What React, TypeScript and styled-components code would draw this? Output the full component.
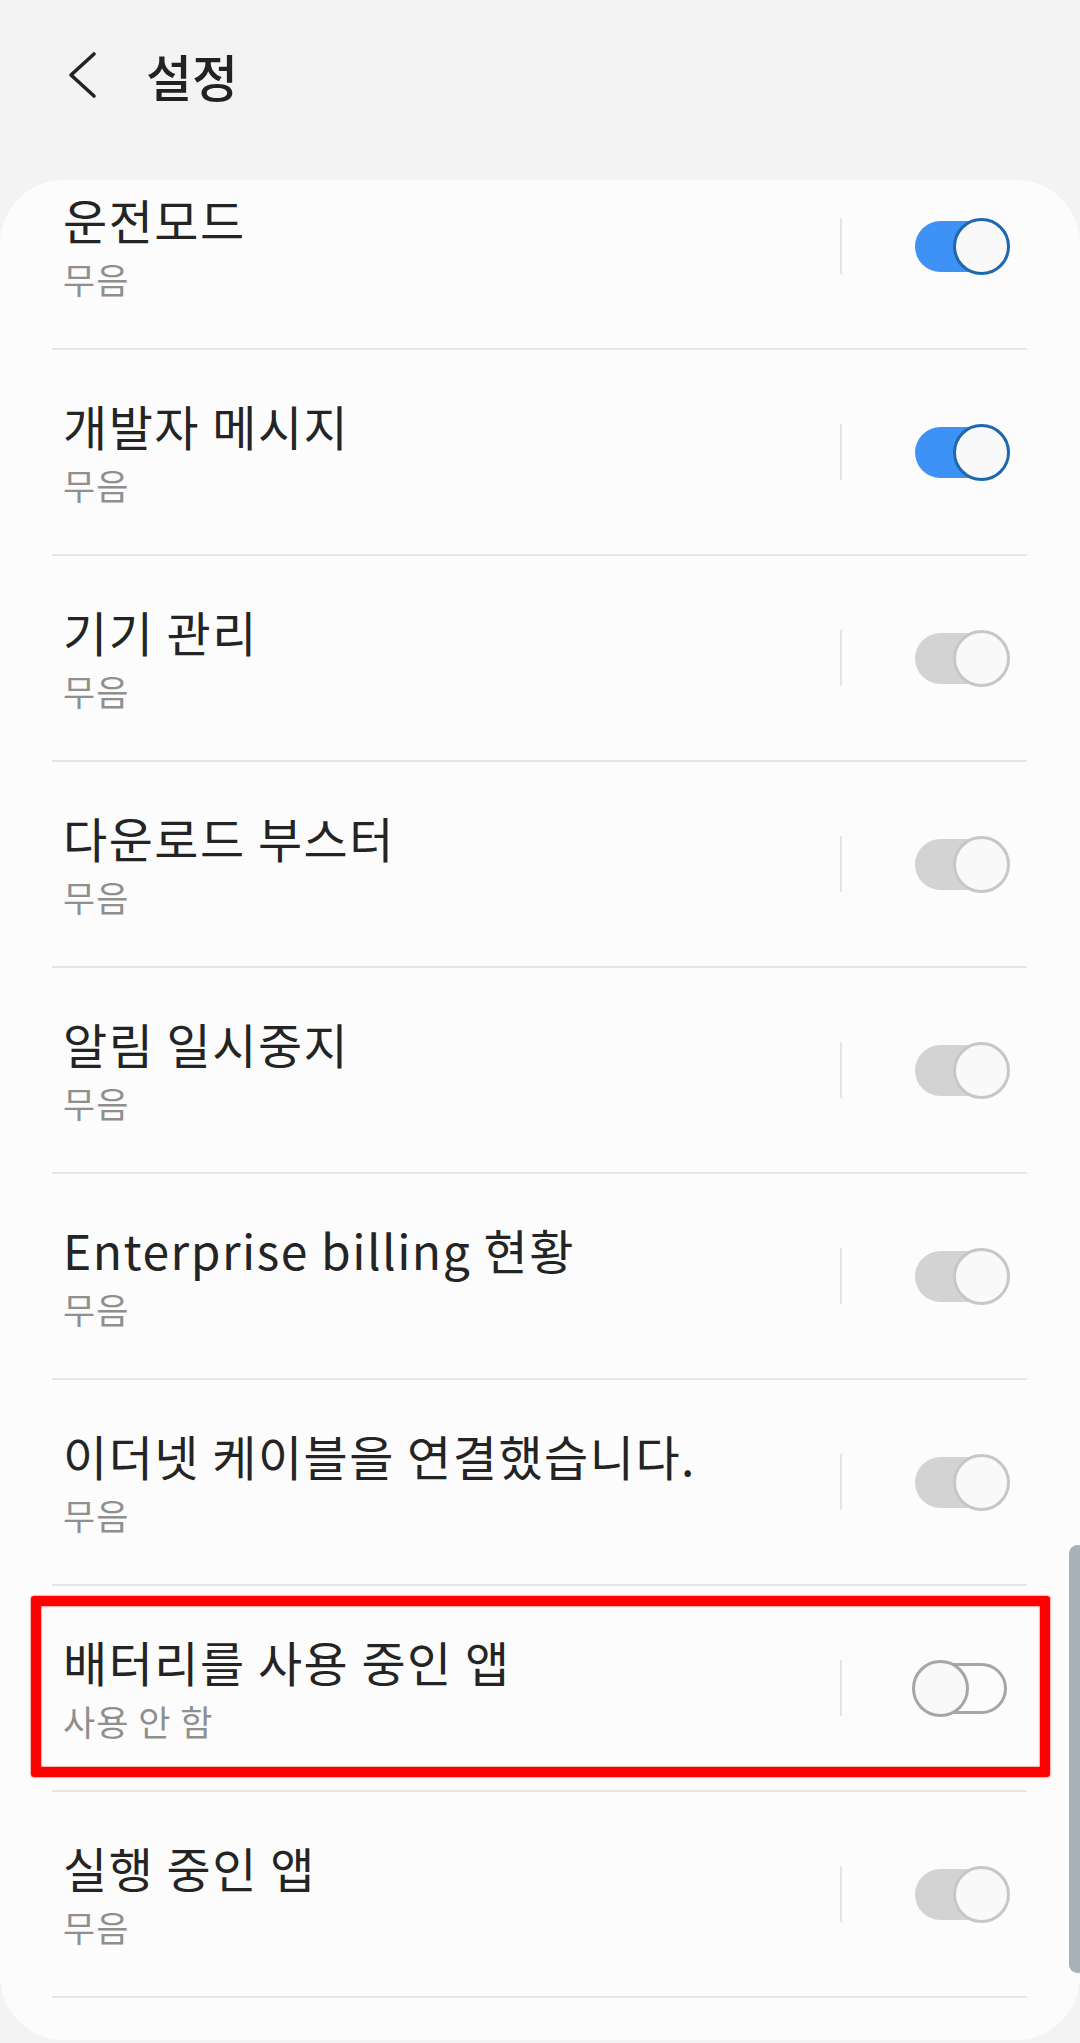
import styled, { createGlobalStyle } from 'styled-components';

type SwitchState = 'on' | 'off' | 'disabled';

interface SettingItem {
  title: string;
  summary: string;
  state: SwitchState;
  marked?: boolean;
}

const items: SettingItem[] = [
  { title: '운전모드', summary: '무음', state: 'on' },
  { title: '개발자 메시지', summary: '무음', state: 'on' },
  { title: '기기 관리', summary: '무음', state: 'disabled' },
  { title: '다운로드 부스터', summary: '무음', state: 'disabled' },
  { title: '알림 일시중지', summary: '무음', state: 'disabled' },
  { title: 'Enterprise billing 현황', summary: '무음', state: 'disabled' },
  { title: '이더넷 케이블을 연결했습니다.', summary: '무음', state: 'disabled' },
  { title: '배터리를 사용 중인 앱', summary: '사용 안 함', state: 'off', marked: true },
  { title: '실행 중인 앱', summary: '무음', state: 'disabled' },
];

const GlobalStyle = createGlobalStyle`
  * {
    box-sizing: border-box;
  }
  body {
    margin: 0;
    height: 2043px;
    overflow: hidden;
    background: #f3f3f3;
    font-family: 'Noto Sans CJK KR', 'Noto Sans', sans-serif;
  }
`;

const BackIcon = () => (
  <svg width='34' height='48' viewBox='0 0 34 48' fill='none'>
    <path d='M28 3 L5 24 L28 45' stroke='#222' strokeWidth='3.6' strokeLinecap='round' strokeLinejoin='round' />
  </svg>
);

const App = () => {
  return (
    <>
      <GlobalStyle />
      <Page>
        <Header>
          <BackButton>
            <BackIcon />
          </BackButton>
          <HeaderTitle>설정</HeaderTitle>
        </Header>
        <Card>
          <List>
            {items.map((item) => (
              <Item key={item.title}>
                <TextArea>
                  <Title>{item.title}</Title>
                  <Summary>{item.summary}</Summary>
                </TextArea>
                <Separator />
                <Switch $state={item.state}>
                  <Track $state={item.state} />
                  <Thumb $state={item.state} />
                </Switch>
                {item.marked && <Highlight />}
              </Item>
            ))}
          </List>
          <ScrollThumb />
        </Card>
      </Page>
    </>
  );
};

const Page = styled.div`
  display: flex;
  flex-direction: column;
  width: 1080px;
  height: 2043px;
  background: #f3f3f3;
`;

const Header = styled.div`
  display: flex;
  align-items: center;
  gap: 46px;
  height: 180px;
  padding: 0 0 30px 66px;
`;

const BackButton = styled.div`
  display: flex;
  align-items: center;
  justify-content: center;
  width: 34px;
  height: 48px;
`;

const HeaderTitle = styled.h1`
  margin: 0;
  color: #222;
  font-size: 50px;
  font-weight: 500;
  line-height: 1;
`;

const Card = styled.div`
  position: relative;
  height: 1860px;
  background: #fcfcfc;
  border-radius: 64px;
  overflow: hidden;
`;

const List = styled.ul`
  margin: -36px 0 0;
  padding: 0;
  list-style: none;
`;

const Item = styled.li`
  position: relative;
  display: flex;
  align-items: center;
  height: 206px;
  margin: 0 53px 0 52px;
  padding: 0 17px 0 11px;
  border-bottom: 2px solid #e6e6e6;
`;

const TextArea = styled.div`
  display: flex;
  flex-direction: column;
  gap: 10px;
  flex: 1;
  min-width: 0;
`;

const Title = styled.span`
  color: #242424;
  font-size: 48px;
  letter-spacing: 1.5px;
  line-height: 56px;
  white-space: nowrap;
`;

const Summary = styled.span`
  color: #8f8f8f;
  font-size: 35px;
  letter-spacing: 1px;
  line-height: 44px;
`;

const Separator = styled.span`
  width: 2px;
  height: 56px;
  margin-right: 70px;
  background: #e4e4e4;
`;

const Switch = styled.div<{ $state: SwitchState }>`
  position: relative;
  display: flex;
  align-items: center;
  justify-content: ${({ $state }) => ($state === 'off' ? 'flex-start' : 'flex-end')};
  width: 98px;
  height: 57px;
`;

const trackColor = { on: '#3f92f5', disabled: '#d3d3d3', off: 'transparent' };
const thumbBorder = { on: '#1c69b0', disabled: '#c7c7c7', off: '#a6a6a6' };

const Track = styled.span<{ $state: SwitchState }>`
  position: absolute;
  left: 3px;
  top: 3px;
  width: 92px;
  height: 51px;
  border-radius: 26px;
  background: ${({ $state }) => trackColor[$state]};
  border: ${({ $state }) => ($state === 'off' ? '3px solid #a6a6a6' : 'none')};
`;

const Thumb = styled.span<{ $state: SwitchState }>`
  position: relative;
  width: 57px;
  height: 57px;
  border-radius: 50%;
  background: #f9f9f9;
  border: 3px solid ${({ $state }) => thumbBorder[$state]};
`;

const Highlight = styled.span`
  position: absolute;
  top: 10px;
  bottom: 13px;
  left: -21px;
  right: -23px;
  border: 10px solid #ff0000;
  border-radius: 3px;
  box-shadow: 0 0 2px #ff0000, inset 0 0 2px #ff0000;
  pointer-events: none;
`;

const ScrollThumb = styled.span`
  position: absolute;
  right: -6px;
  top: 1365px;
  width: 17px;
  height: 428px;
  border-radius: 9px;
  background: #a6b1b9;
`;

export default App;
